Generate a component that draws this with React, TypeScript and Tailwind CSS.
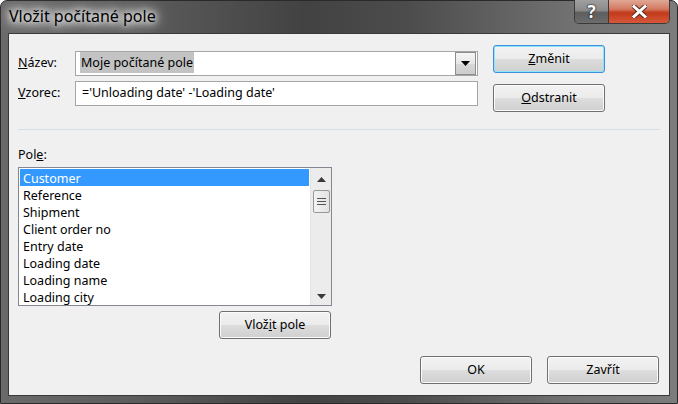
import React from "react";

const font = "[font-family:'Noto_Sans',sans-serif]";

const btn =
  "h-[28px] w-[112px] rounded-[3px] border border-[#707070] bg-[linear-gradient(to_bottom,#f2f2f2_0%,#ebebeb_50%,#dddddd_51%,#cfcfcf_100%)] shadow-[inset_0_0_0_1px_#fbfbfb] flex items-center justify-center text-[12.5px] text-black";

const fields = [
  "Customer",
  "Reference",
  "Shipment",
  "Client order no",
  "Entry date",
  "Loading date",
  "Loading name",
  "Loading city",
];

const Tri: React.FC<{ down?: boolean }> = ({ down }) => (
  <svg width="9" height="5" viewBox="0 0 9 5">
    <path d={down ? "M0 0 L9 0 L4.5 5 Z" : "M0 5 L9 5 L4.5 0 Z"} fill="#3a3a3a" />
  </svg>
);

const App: React.FC = () => {
  return (
    <div className={`w-[678px] h-[404px] ${font}`}>
      <div className="w-full h-full flex flex-col border border-[#2a2a2a] rounded-t-[7px] px-[7px] pb-[7px] bg-[linear-gradient(to_right,#6a6a6a_0%,#5c5c5c_20%,#424242_45%,#4c4c4c_60%,#727272_85%,#7c7c7c_100%)]">
        {/* title bar */}
        <div className="h-[32px] flex items-start justify-between">
          <div className="mt-[5px] ml-px text-[16px] leading-[21px] text-black [text-shadow:0_0_6px_#fff,0_0_10px_#fff,0_0_14px_#fff,0_0_20px_#eee]">
            Vložit počítané pole
          </div>
          <div className="flex h-[24px] -mt-px border border-t-0 border-[#3a3a3a] rounded-b-[5px] overflow-hidden">
            <div className="w-[34px] h-full flex items-center justify-center border-r border-[#3a3a3a] bg-[linear-gradient(to_bottom,#a0a0a0_0%,#8a8a8a_45%,#5e5e5e_55%,#6c6c6c_100%)] text-white text-[17px] font-bold leading-none [text-shadow:0_0_1px_#222,0_0_1px_#222,0_0_2px_#222]">
              ?
            </div>
            <div className="w-[60px] h-full flex items-center justify-center bg-[linear-gradient(to_bottom,#e0a896_0%,#d4785f_40%,#c23a1a_55%,#d5583a_100%)]">
              <svg width="15" height="13" viewBox="0 0 15 13">
                <path d="M2 1.5 L13 11.5 M13 1.5 L2 11.5" stroke="#5a2a1e" strokeWidth="5" strokeLinecap="square" />
                <path d="M2 1.5 L13 11.5 M13 1.5 L2 11.5" stroke="#fff" strokeWidth="3" strokeLinecap="square" />
              </svg>
            </div>
          </div>
        </div>

        {/* client area */}
        <div className="flex-1 border border-[#3a3a3a] bg-[#f0f0f0] flex flex-col pl-[9px] pr-[9px] pt-[11px] pb-[11px] text-[12.5px] text-black">
          <div className="flex items-start">
            <div className="mt-[6px] flex flex-col gap-[5px]">
              <div className="flex items-center">
                <span className="w-[57px]">
                  <u>N</u>ázev:
                </span>
                <div className="w-[403px] h-[25px] border border-[#a5a5a5] bg-white flex items-center pl-[4px] pr-px">
                  <span className="flex-1">
                    <span className="bg-[#c3c3c3] px-px py-[2px]">Moje počítané pole</span>
                  </span>
                  <div className="w-[21px] h-[23px] border border-[#8c8c8c] bg-[linear-gradient(to_bottom,#f6f6f6_0%,#e6e6e6_50%,#d8d8d8_51%,#cccccc_100%)] flex items-center justify-center">
                    <svg width="9" height="5" viewBox="0 0 9 5">
                      <path d="M0 0 L9 0 L4.5 5 Z" fill="#000" />
                    </svg>
                  </div>
                </div>
              </div>
              <div className="flex items-center">
                <span className="w-[57px]">
                  <u>V</u>zorec:
                </span>
                <div className="w-[403px] h-[25px] border border-[#a5a5a5] bg-white flex items-center pl-[6px]">
                  ='Unloading date' -'Loading date'
                </div>
              </div>
            </div>
            <div className="ml-[15px] flex flex-col gap-[11px]">
              <div className={`${btn} !border-[#3c8fd8] !shadow-[inset_0_0_0_1px_#8ee4fb]`}>
                <span>
                  <u>Z</u>měnit
                </span>
              </div>
              <div className={btn}>
                <span>
                  <u>O</u>dstranit
                </span>
              </div>
            </div>
          </div>

          <div className="mt-[17px] h-px bg-[#d5dfe5]" />

          <div className="mt-[17px] h-[16px] leading-[16px]">
            Pol<u>e</u>:
          </div>

          <div className="mt-[4px] w-[314px] h-[139px] border border-[#828790] bg-white flex">
            <div className="flex-1 p-px overflow-hidden">
              {fields.map((f, i) => (
                <div
                  key={f}
                  className={`h-[17px] leading-[17px] pt-px pl-[3px] whitespace-nowrap ${
                    i === 0 ? "bg-[#3399ff] text-white" : ""
                  }`}
                >
                  {f}
                </div>
              ))}
            </div>
            <div className="w-[21px] bg-[#ececec] border-l border-[#e4e4e4] flex flex-col items-center">
              <div className="h-[22px] flex items-center justify-center">
                <Tri />
              </div>
              <div className="w-[17px] h-[23px] rounded-[2px] border border-[#979797] bg-[linear-gradient(to_right,#f3f3f3,#e2e2e2)] flex flex-col items-center justify-center gap-[2px]">
                <div className="w-[9px] h-px bg-[#555]" />
                <div className="w-[9px] h-px bg-[#555]" />
                <div className="w-[9px] h-px bg-[#555]" />
              </div>
              <div className="flex-1" />
              <div className="h-[18px] flex items-center justify-center">
                <Tri down />
              </div>
            </div>
          </div>

          <div className="mt-[5px] w-[314px] flex justify-end pr-px">
            <div className={btn}>
              <span>
                Vlož<u>i</u>t pole
              </span>
            </div>
          </div>

          <div className="mt-auto flex justify-end gap-[15px] pr-px">
            <div className={btn}>OK</div>
            <div className={btn}>Zavřít</div>
          </div>
        </div>
      </div>
    </div>
  );
};

export default App;
